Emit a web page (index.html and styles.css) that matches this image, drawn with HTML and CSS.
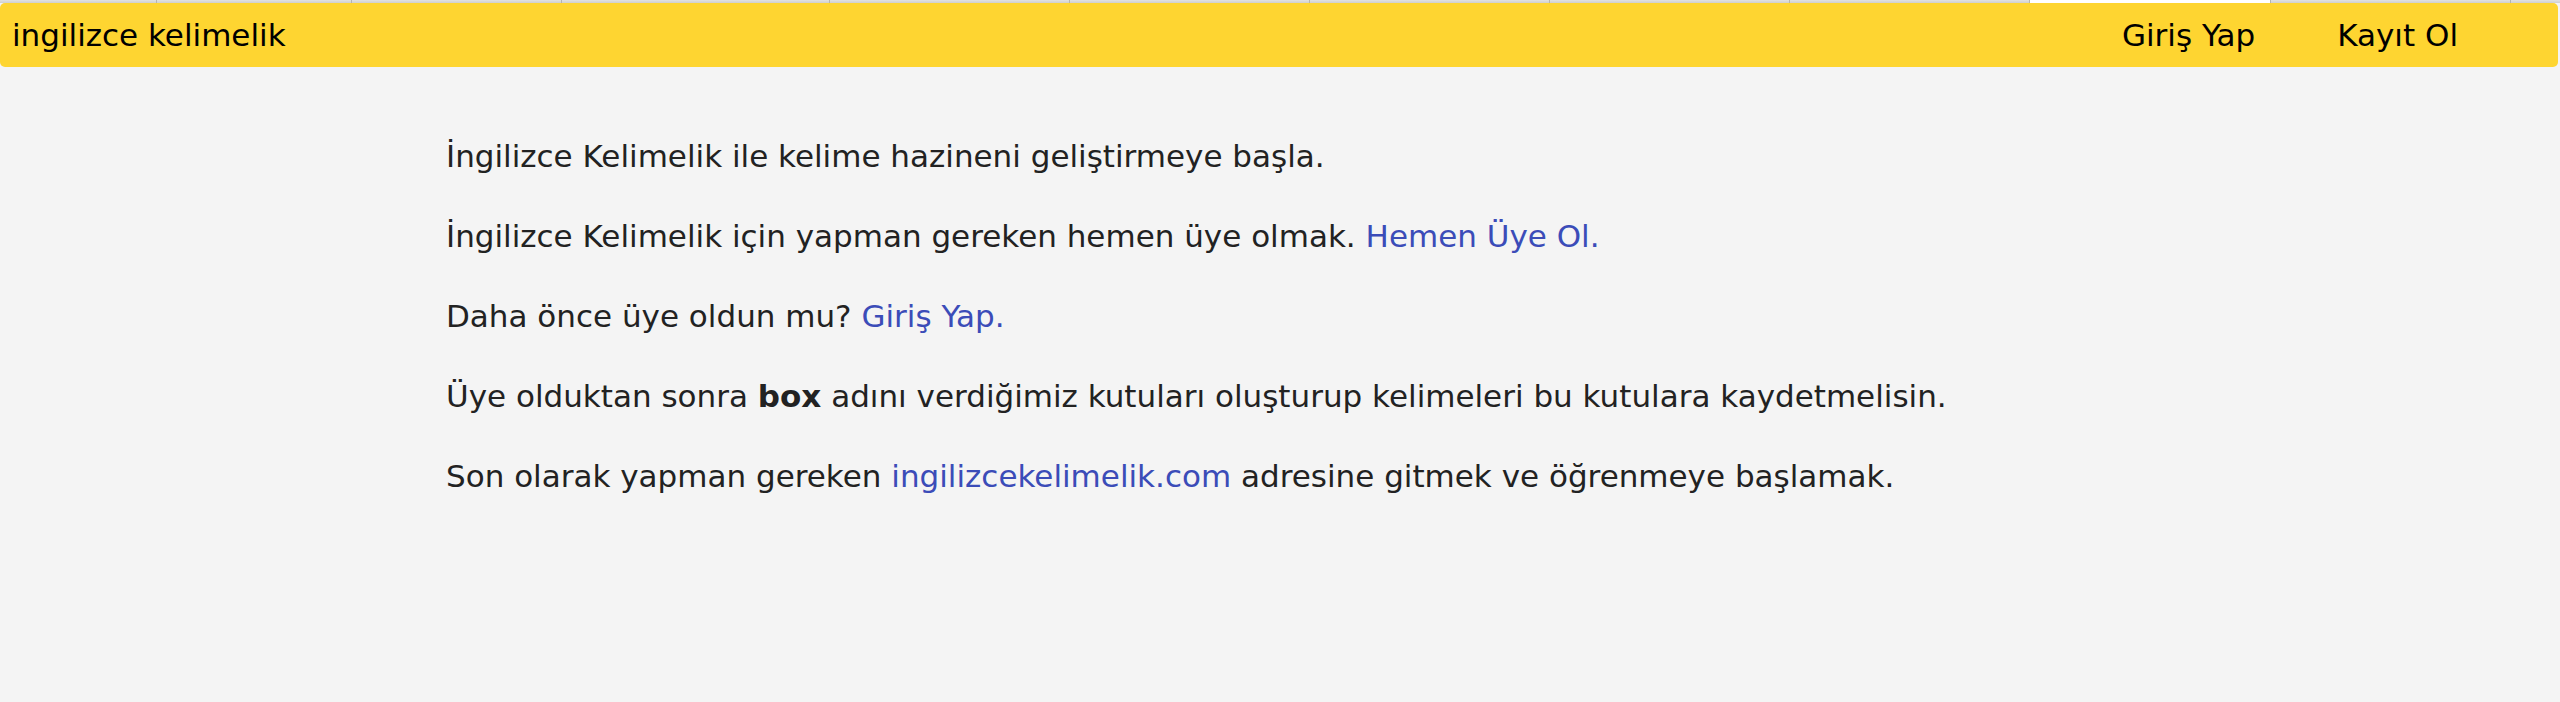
FILE: index.html
```html
<!DOCTYPE html>
<html lang="tr">
<head>
<meta charset="utf-8">
<title>ingilizce kelimelik</title>
<link rel="stylesheet" href="styles.css">
</head>
<body>
<div class="tabstrip">
  <span class="tab t1"></span><span class="tab t2"></span><span class="tab t3"></span><span class="tab t4"></span><span class="tab t5"></span><span class="tab t5"></span><span class="tab t5"></span><span class="tab t5"></span><span class="tab t5"></span><span class="tab blank"></span><span class="tab t5"></span><span class="tab rest"></span>
</div>
<nav class="navbar">
  <a class="brand" href="#">ingilizce kelimelik</a>
  <div class="nav-links">
    <a class="nav-link" href="#">Giriş Yap</a>
    <a class="nav-link" href="#">Kayıt Ol</a>
  </div>
</nav>
<main class="content">
  <p>İngilizce Kelimelik ile kelime hazineni geliştirmeye başla.</p>
  <p>İngilizce Kelimelik için yapman gereken hemen üye olmak. <a class="link" href="#">Hemen Üye Ol.</a></p>
  <p>Daha önce üye oldun mu? <a class="link" href="#">Giriş Yap.</a></p>
  <p>Üye olduktan sonra <b>box</b> adını verdiğimiz kutuları oluşturup kelimeleri bu kutulara kaydetmelisin.</p>
  <p>Son olarak yapman gereken <a class="link" href="#">ingilizcekelimelik.com</a> adresine gitmek ve öğrenmeye başlamak.</p>
</main>
</body>
</html>
```
FILE: styles.css
```css
html, body {
  margin: 0;
  padding: 0;
  background: #f4f4f4;
  font-family: "DejaVu Sans", "Liberation Sans", sans-serif;
  color: #222222;
}
.tabstrip {
  display: flex;
  height: 3px;
  background: #d8d8d8;
}
.tab {
  height: 3px;
  border-right: 1px solid #b4b4b4;
  box-sizing: border-box;
  background: linear-gradient(#e2e2e2, #cfcfcf);
}
.t1 { width: 157px; }
.t2 { width: 195px; }
.t3 { width: 210px; }
.t4 { width: 268px; }
.t5 { width: 240px; }
.blank { width: 241px; background: #ffffff; }
.rest { flex: 1; border-right: none; }
.navbar {
  display: flex;
  align-items: center;
  justify-content: space-between;
  height: 64px;
  width: 2558px;
  box-sizing: border-box;
  background: #fed531;
  border-radius: 5px;
  padding: 0 100px 0 12px;
}
.navbar a {
  color: #000000;
  text-decoration: none;
  font-size: 31px;
}
.nav-links {
  display: flex;
  gap: 82px;
}
.content {
  width: 1668px;
  margin: 0 auto;
  padding-top: 49px;
}
.content p {
  margin: 0;
  font-size: 31px;
  line-height: 80px;
}
.content b {
  font-weight: bold;
}
.link {
  color: #3b4cb8;
  text-decoration: none;
}
```
